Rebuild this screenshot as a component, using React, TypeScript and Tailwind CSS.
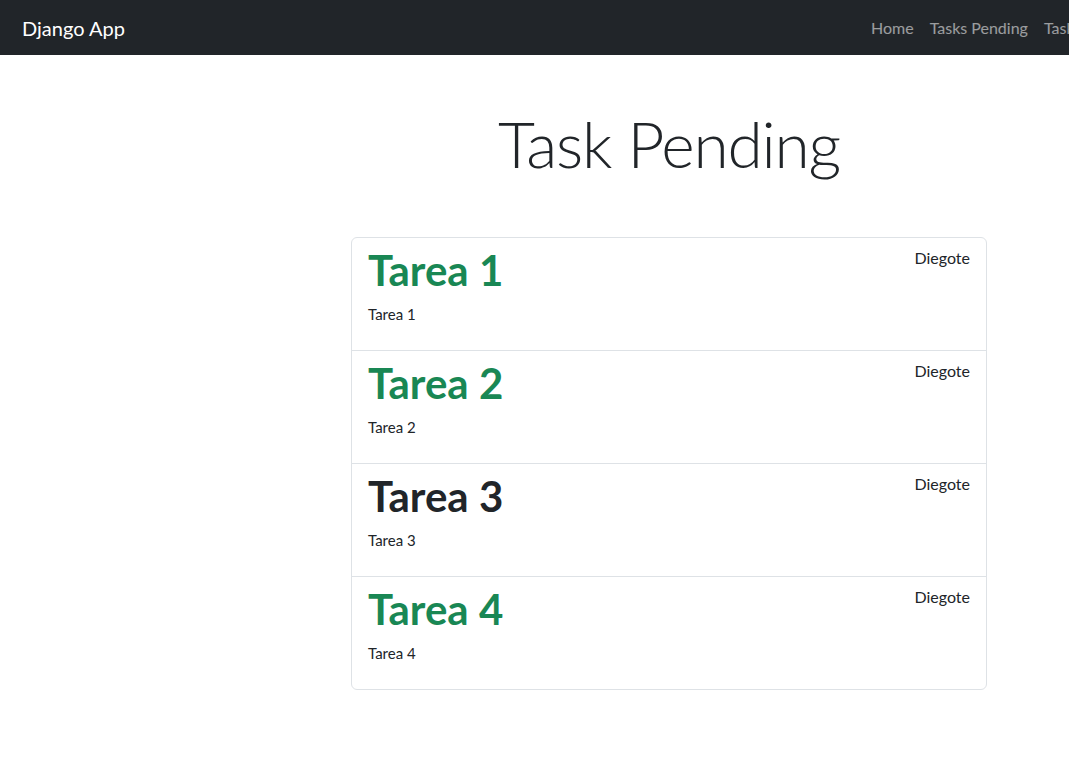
const tasks = [
  { title: "Tarea 1", description: "Tarea 1", user: "Diegote", done: false },
  { title: "Tarea 2", description: "Tarea 2", user: "Diegote", done: false },
  { title: "Tarea 3", description: "Tarea 3", user: "Diegote", done: true },
  { title: "Tarea 4", description: "Tarea 4", user: "Diegote", done: false },
];

const links = ["Home", "Tasks Pending", "Tasks Completed", "Create Task", "Logout"];

const Navbar = () => {
  return (
    <nav className="flex h-[55px] items-center overflow-hidden bg-[#212529]">
      <div className="w-[863px] shrink-0 pl-[22px]">
        <a className="text-[20px] leading-[30px] text-white">Django App</a>
      </div>
      <ul className="flex shrink-0">
        {links.map((link) => (
          <li key={link} className="whitespace-nowrap px-2 text-base leading-6 text-white/55">
            {link}
          </li>
        ))}
      </ul>
    </nav>
  );
};

const TaskItem: React.FC<{
  title: string;
  description: string;
  user: string;
  done: boolean;
}> = ({ title, description, user, done }) => {
  return (
    <li className="border-b border-[#dee2e6] px-4 py-2 last:border-b-0">
      <div className="flex items-start justify-between">
        <h2
          className={`text-[42px] font-bold leading-[48px] ${
            done ? "text-[#212529]" : "text-[#198754]"
          }`}
        >
          {title}
        </h2>
        <small className="text-base leading-6 text-[#212529]">{user}</small>
      </div>
      <p className="mb-[17px] mt-[10px] text-[15px] leading-[21px] text-[#212529]">{description}</p>
    </li>
  );
};

export default function App() {
  return (
    <div
      className="min-h-[767px] w-full overflow-hidden bg-white"
      style={{ fontFamily: 'Lato, "Open Sans", sans-serif' }}
    >
      <Navbar />
      <main className="ml-[351px] w-[636px] pt-[44px]">
        <h1 className="text-center text-[64px] font-light leading-[89px] tracking-[-1.2px] text-[#212529]">
          Task Pending
        </h1>
        <ul className="mt-[49px] overflow-hidden rounded-md border border-[#dee2e6]">
          {tasks.map((task) => (
            <TaskItem key={task.title} {...task} />
          ))}
        </ul>
      </main>
    </div>
  );
}
